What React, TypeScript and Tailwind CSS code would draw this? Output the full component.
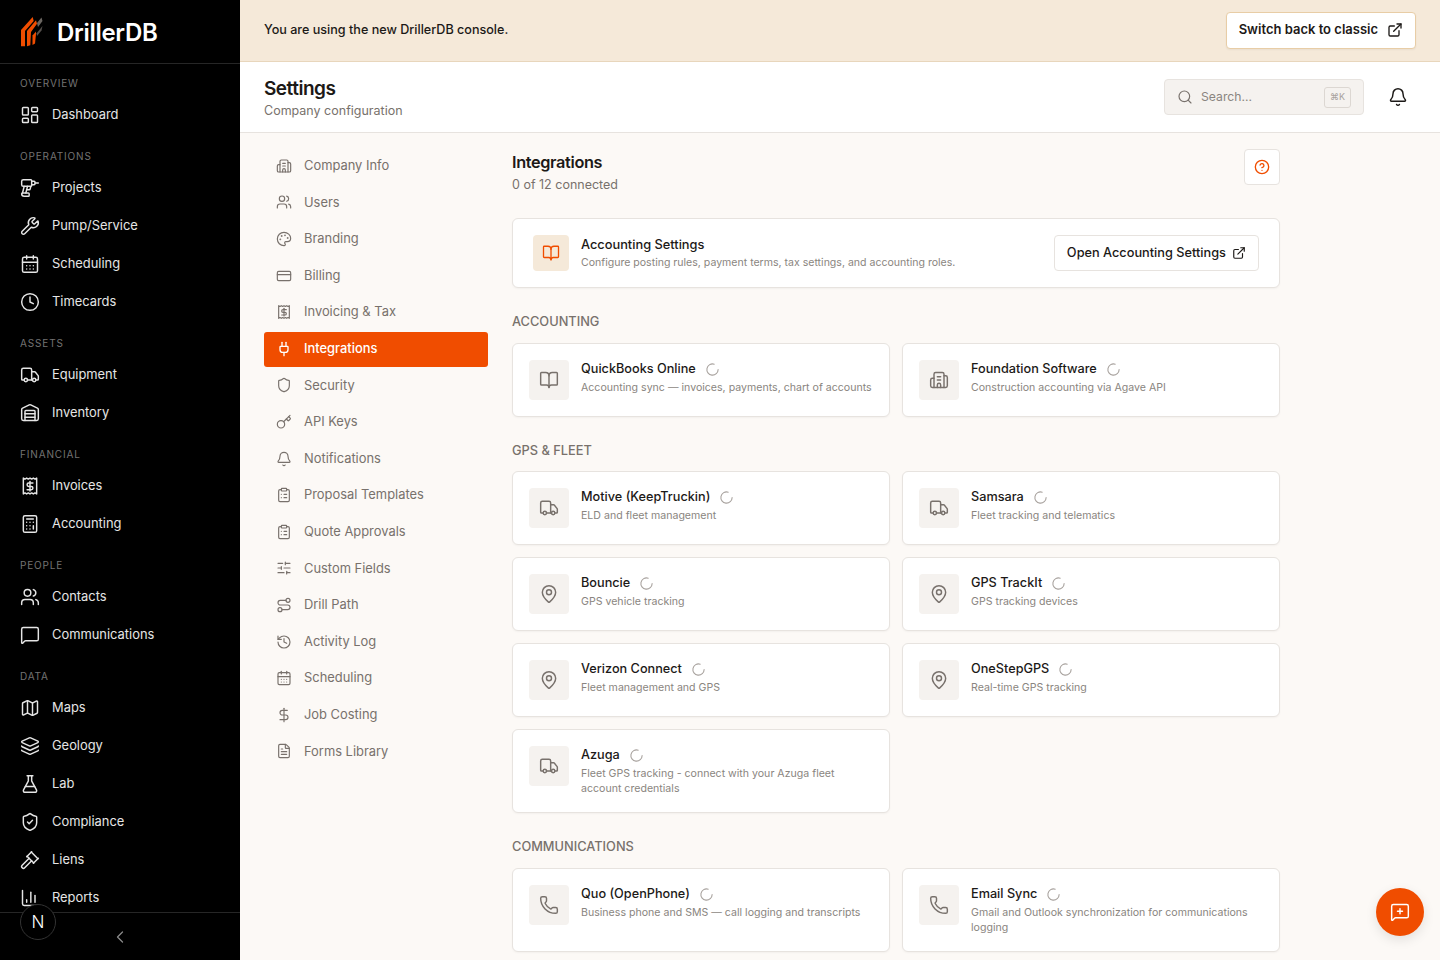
import React from "react";
import {
  LayoutDashboard, Drill, Wrench, CalendarDays, Clock, Truck, Warehouse, Calculator, Users, MessageSquare,
  Map as MapIcon, Layers, FlaskConical, ShieldCheck, Gavel, ChartColumn, ChevronLeft, Building2, Palette, CreditCard,
  Plug, Shield, Key, Bell, ClipboardList, SlidersHorizontal, Route, History, DollarSign, FileText,
  ExternalLink, Search, CircleHelp, BookOpen, MapPin, Phone, LoaderCircle, MessageSquarePlus,
} from "lucide-react";

type IconProps = { size?: number; strokeWidth?: number; className?: string };

function ReceiptDollar({ size = 24, strokeWidth = 2, className }: IconProps) {
  return (
    <svg width={size} height={size} viewBox="0 0 24 24" fill="none" stroke="currentColor" strokeWidth={strokeWidth} strokeLinecap="round" strokeLinejoin="round" className={className}>
      <path d="M4 2.5l2 1.2 2-1.2 2 1.2 2-1.2 2 1.2 2-1.2 2 1.2 2-1.2v19l-2-1.2-2 1.2-2-1.2-2 1.2-2-1.2-2 1.2-2-1.2-2 1.2z" />
      <path d="M15.5 8.5h-5a2 2 0 0 0 0 4h3a2 2 0 0 1 0 4h-5" />
      <path d="M12 6.5v11.500" />
    </svg>
  );
}

const sideGroups: { label: string; items: [string, React.ComponentType<IconProps>][] }[] = [
  { label: "OVERVIEW", items: [["Dashboard", LayoutDashboard]] },
  { label: "OPERATIONS", items: [["Projects", Drill], ["Pump/Service", Wrench], ["Scheduling", CalendarDays], ["Timecards", Clock]] },
  { label: "ASSETS", items: [["Equipment", Truck], ["Inventory", Warehouse]] },
  { label: "FINANCIAL", items: [["Invoices", ReceiptDollar], ["Accounting", Calculator]] },
  { label: "PEOPLE", items: [["Contacts", Users], ["Communications", MessageSquare]] },
  { label: "DATA", items: [["Maps", MapIcon], ["Geology", Layers], ["Lab", FlaskConical], ["Compliance", ShieldCheck], ["Liens", Gavel], ["Reports", ChartColumn]] },
];

const settingsNav: [string, React.ComponentType<IconProps>][] = [
  ["Company Info", Building2], ["Users", Users], ["Branding", Palette], ["Billing", CreditCard], ["Invoicing & Tax", ReceiptDollar],
  ["Integrations", Plug], ["Security", Shield], ["API Keys", Key], ["Notifications", Bell], ["Proposal Templates", ClipboardList],
  ["Quote Approvals", ClipboardList], ["Custom Fields", SlidersHorizontal], ["Drill Path", Route], ["Activity Log", History],
  ["Scheduling", CalendarDays], ["Job Costing", DollarSign], ["Forms Library", FileText],
];

function Logo() {
  return (
    <svg width="24" height="32" viewBox="19 17 24 32" className="shrink-0">
      <path d="M20 31 L31.7 18 L32.7 22 L24 32 L24 47.3 L20 47.3 Z" fill="#f04d00" />
      <path d="M26 32 L35 21.3 L36 24.7 L30 33 L29.3 46.3 L26 47.3 Z" fill="#f04d00" />
      <path d="M31.500 36.500 L35 32.500 L35 35 L34 44.500 L31.500 46 Z" fill="#f04d00" />
      <path d="M36 24 L40.500 18.500 L41.500 22 L37 28 Z" fill="#6b6661" />
      <path d="M35.500 34.500 L41.500 27 L40.500 31.500 L36 37 Z" fill="#55504c" />
    </svg>
  );
}

function Sidebar() {
  return (
    <aside className="relative flex h-full w-[240px] shrink-0 flex-col bg-black">
      <div className="flex h-[64px] shrink-0 items-center gap-[13px] border-b border-[#262626] pl-[20px]">
        <Logo />
        <span className="pt-[2px] text-[24px] font-semibold leading-none tracking-[-0.3px] text-white">DrillerDB</span>
      </div>
      <nav className="min-h-0 flex-1 overflow-hidden pt-[11px]">
        {sideGroups.map((g) => (
          <div key={g.label} className="mb-[14px]">
            <div className="flex h-[16px] items-center pl-[20px] text-[10px] font-normal tracking-[0.85px] text-[#737373]">{g.label}</div>
            <div className="mt-[5px] flex flex-col">
              {g.items.map(([name, Icon]) => (
                <div key={name} className="flex h-[38px] items-center gap-[12px] pl-[20px] text-[12.9px] font-normal text-[#e5e5e5]">
                  <Icon size={20} strokeWidth={1.75} className="shrink-0" />
                  <span>{name}</span>
                </div>
              ))}
            </div>
          </div>
        ))}
      </nav>
      <div className="flex h-[48px] shrink-0 items-center justify-center border-t border-[#262626]">
        <ChevronLeft size={20} strokeWidth={1.5} className="text-[#8a8a8a]" />
      </div>
      <div className="absolute left-[20px] top-[904px] flex h-[36px] w-[36px] items-center justify-center rounded-full border border-[#333] bg-black pt-[2px] text-[17px] font-light text-white">N</div>
    </aside>
  );
}

function SectionLabel({ children, className }: { children: React.ReactNode; className: string }) {
  return <div className={"h-[18px] text-[12.8px] font-medium leading-[20px] text-[#78716c] " + className}>{children}</div>;
}

function Card({ name, desc, Icon, big }: { name: string; desc: string; Icon: React.ComponentType<IconProps>; big?: boolean }) {
  return (
    <div className={"flex items-start gap-[12px] rounded-[6px] border border-[#e7e3df] bg-white pl-[16px] pr-[16px] pt-[16px] shadow-[0_1px_2px_rgba(0,0,0,0.04)] " + (big ? "h-[84px]" : "h-[74px]")}>
      <div className="flex h-[40px] w-[40px] shrink-0 items-center justify-center rounded-[4px] bg-[#f5f2ef] text-[#78716c]">
        <Icon size={20} strokeWidth={1.75} />
      </div>
      <div className="min-w-0 flex-1">
        <div className="flex h-[18px] items-center gap-[9px] text-[12.7px] font-medium leading-[18px] text-[#1c1917]">
          <span>{name}</span>
          <LoaderCircle size={15} strokeWidth={1.75} className="mt-[1px] text-[#a8a29e]" />
        </div>
        <div className="mt-[3px] text-[10.6px] leading-[14.5px] text-[#8a8580]">{desc}</div>
      </div>
    </div>
  );
}

export default function App() {
  return (
    <div className="flex h-[960px] w-[1440px] overflow-hidden bg-[#fcf9f6] font-['Inter',sans-serif]">
      <Sidebar />
      <div className="flex min-w-0 flex-1 flex-col">
        <div className="flex h-[62px] shrink-0 items-center justify-between border-b border-[#e8d6bc] bg-[#f5e9d9] pl-[24px] pr-[24px]">
          <span className="pb-[1px] text-[12.6px] font-medium text-[#1c1917]">You are using the new DrillerDB console.</span>
          <button className="flex h-[37px] items-center gap-[9px] rounded-[4px] border border-[#e8cda6] bg-white pl-[12px] pr-[12px] pb-[1px] text-[13px] font-semibold text-[#1c1917] shadow-[0_1px_2px_rgba(0,0,0,0.05)]">
            Switch back to classic
            <ExternalLink size={16} strokeWidth={2} />
          </button>
        </div>
        <header className="flex h-[71px] shrink-0 items-center justify-between border-b border-[#e7e3df] bg-white pl-[24px] pr-[32px]">
          <div className="pt-[2px]">
            <h1 className="pt-[1px] text-[19px] font-semibold leading-[24px] tracking-[-0.5px] text-[#1c1917]">Settings</h1>
            <p className="mt-[1px] text-[12.5px] leading-[18px] text-[#78716c]">Company configuration</p>
          </div>
          <div className="flex items-center gap-[24px]">
            <div className="flex h-[36px] w-[200px] items-center gap-[8px] rounded-[4px] border border-[#e7e3df] bg-[#f5f2ef] pl-[12px] pr-[12px]">
              <Search size={16} strokeWidth={1.75} className="text-[#78716c]" />
              <span className="flex-1 text-[12.2px] text-[#8a8580]">Search...</span>
              <span className="flex h-[21px] w-[27px] items-center justify-center rounded-[3px] border border-[#dcd7d2] text-[9px] text-[#a8a29e]">⌘K</span>
            </div>
            <Bell size={20} strokeWidth={1.75} className="text-[#1c1917]" />
          </div>
        </header>
        <div className="flex min-h-0 flex-1 overflow-hidden">
          <nav className="flex w-[272px] shrink-0 flex-col gap-[2px] pl-[24px] pr-[24px] pt-[16px]">
            {settingsNav.map(([name, Icon]) => {
              const active = name === "Integrations";
              return (
                <div key={name} className={"flex h-[34.6px] items-center gap-[12px] rounded-[3px] pb-[1px] pl-[12px] text-[12.9px] " + (active ? "bg-[#f04d00] font-medium text-white" : "font-normal text-[#78716c]")}>
                  <Icon size={16} strokeWidth={active ? 2 : 1.75} className="shrink-0" />
                  <span>{name}</span>
                </div>
              );
            })}
          </nav>
          <main className="w-[768px] shrink-0 pt-[16px]">
            <div className="flex h-[37px] items-start justify-between">
              <div>
                <h2 className="text-[16.3px] font-semibold leading-[26px] tracking-[-0.35px] text-[#1c1917]">Integrations</h2>
                <p className="text-[12.5px] leading-[20px] text-[#78716c]">0 of 12 connected</p>
              </div>
              <div className="flex h-[36px] w-[36px] items-center justify-center rounded-[4px] border border-[#e7e3df] bg-white">
                <CircleHelp size={16} strokeWidth={2} className="text-[#f04d00]" />
              </div>
            </div>
            <div className="mt-[32px] flex h-[70px] items-center gap-[12px] rounded-[6px] border border-[#e7e3df] bg-white pl-[20px] pr-[20px] shadow-[0_1px_2px_rgba(0,0,0,0.04)]">
              <div className="flex h-[36px] w-[36px] shrink-0 items-center justify-center rounded-[4px] bg-[#f5e9d9] text-[#f04d00]">
                <BookOpen size={18} strokeWidth={1.75} />
              </div>
              <div className="min-w-0 flex-1">
                <div className="text-[12.8px] font-medium leading-[18px] text-[#1c1917]">Accounting Settings</div>
                <div className="mt-[1.500px] text-[10.55px] leading-[14px] text-[#8a8580]">Configure posting rules, payment terms, tax settings, and accounting roles.</div>
              </div>
              <button className="flex h-[36px] items-center gap-[6px] rounded-[4px] border border-[#e7e3df] bg-white pl-[12px] pr-[12px] text-[12.75px] font-medium text-[#1c1917]">
                Open Accounting Settings
                <ExternalLink size={14} strokeWidth={2} />
              </button>
            </div>
            <SectionLabel className="mt-[24px]">ACCOUNTING</SectionLabel>
            <div className="mt-[13px] grid grid-cols-2 gap-[12px]">
              <Card name="QuickBooks Online" desc="Accounting sync — invoices, payments, chart of accounts" Icon={BookOpen} />
              <Card name="Foundation Software" desc="Construction accounting via Agave API" Icon={Building2} />
            </div>
            <SectionLabel className="mt-[24px]">GPS &amp; FLEET</SectionLabel>
            <div className="mt-[12px] grid grid-cols-2 gap-[12px]">
              <Card name="Motive (KeepTruckin)" desc="ELD and fleet management" Icon={Truck} />
              <Card name="Samsara" desc="Fleet tracking and telematics" Icon={Truck} />
              <Card name="Bouncie" desc="GPS vehicle tracking" Icon={MapPin} />
              <Card name="GPS TrackIt" desc="GPS tracking devices" Icon={MapPin} />
              <Card name="Verizon Connect" desc="Fleet management and GPS" Icon={MapPin} />
              <Card name="OneStepGPS" desc="Real-time GPS tracking" Icon={MapPin} />
              <Card name="Azuga" desc="Fleet GPS tracking - connect with your Azuga fleet account credentials" Icon={Truck} big />
            </div>
            <SectionLabel className="mt-[24px]">COMMUNICATIONS</SectionLabel>
            <div className="mt-[13px] grid grid-cols-2 gap-[12px]">
              <Card name="Quo (OpenPhone)" desc="Business phone and SMS — call logging and transcripts" Icon={Phone} big />
              <Card name="Email Sync" desc="Gmail and Outlook synchronization for communications logging" Icon={Phone} big />
            </div>
          </main>
        </div>
      </div>
      <div className="fixed bottom-[24px] right-[16px] flex h-[48px] w-[48px] items-center justify-center rounded-full bg-[#f04d00] text-white shadow-[0_4px_12px_rgba(0,0,0,0.1)]">
        <MessageSquarePlus size={20} strokeWidth={1.75} />
      </div>
    </div>
  );
}
